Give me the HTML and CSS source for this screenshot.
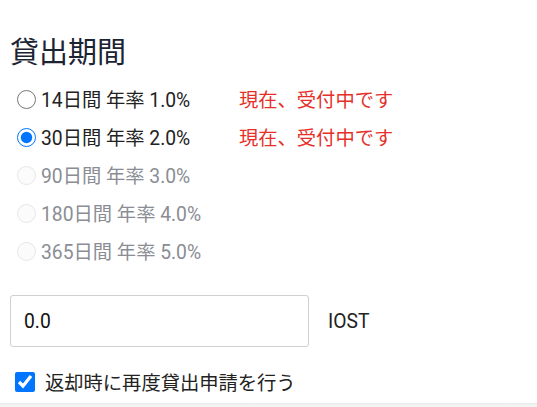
FILE: index.html
```html
<!DOCTYPE html>
<html lang="ja">
<head>
    <meta charset="UTF-8">
    <meta name="viewport" content="width=device-width, initial-scale=1.0">
    <title>貸出期間</title>
    <link rel="stylesheet" href="styles.css">
</head>
<body>
    <div class="container">
        <h1>貸出期間</h1>
        <form class="period-form">
            <label class="period">
                <input type="radio" name="period" value="14">
                <span class="period-name">14日間 年率 1.0%</span>
                <span class="status">現在、受付中です</span>
            </label>
            <label class="period">
                <input type="radio" name="period" value="30" checked>
                <span class="period-name">30日間 年率 2.0%</span>
                <span class="status">現在、受付中です</span>
            </label>
            <label class="period disabled">
                <input type="radio" name="period" value="90" disabled>
                <span class="period-name">90日間 年率 3.0%</span>
            </label>
            <label class="period disabled">
                <input type="radio" name="period" value="180" disabled>
                <span class="period-name">180日間 年率 4.0%</span>
            </label>
            <label class="period disabled">
                <input type="radio" name="period" value="365" disabled>
                <span class="period-name">365日間 年率 5.0%</span>
            </label>

            <div class="amount-row">
                <input type="text" id="amount" value="0.0">
                <span class="unit">IOST</span>
            </div>

            <label class="renew">
                <input type="checkbox" checked>
                <span>返却時に再度貸出申請を行う</span>
            </label>
        </form>
    </div>
    <div class="bottom-bar"></div>
</body>
</html>
```

FILE: styles.css
```css
body {
    font-family: Roboto, "Noto Sans CJK JP", sans-serif;
    background-color: #fff;
    color: #212529;
    margin: 0;
    padding: 0;
}
.container {
    padding: 0 10px;
    height: 403px;
    overflow: hidden;
}
h1 {
    margin: 0;
    padding-top: 32px;
    font-size: 29px;
    font-weight: 400;
    line-height: 42px;
    color: #1c2333;
}
.period-form {
    margin-top: 6px;
}
.period {
    display: flex;
    align-items: center;
    height: 38px;
    font-size: 19.3px;
    color: #222;
}
.period input[type="radio"] {
    width: 19px;
    height: 19px;
    margin: 0 5px 0 7px;
}
.period-name {
    width: 198px;
}
.status {
    color: #e5302a;
}
.period.disabled {
    color: #8a8d94;
}
.period.disabled input[type="radio"] {
    opacity: 0.5;
}
.amount-row {
    display: flex;
    align-items: center;
    margin-top: 25px;
}
#amount {
    width: 299px;
    height: 52px;
    box-sizing: border-box;
    padding: 0 13px;
    border: 1px solid #d0d0d0;
    border-radius: 3px;
    font-family: Roboto, sans-serif;
    font-size: 19.3px;
    color: #111;
}
.unit {
    margin-left: 19px;
    font-size: 19.3px;
    color: #222;
}
.renew {
    display: flex;
    align-items: center;
    margin-top: 21px;
    font-size: 19.3px;
    color: #222;
}
.renew input[type="checkbox"] {
    width: 20px;
    height: 20px;
    margin: 0 10px 0 5px;
}
.bottom-bar {
    height: 4px;
    background: linear-gradient(to bottom, #ececec, #f7f7f7);
}
```
